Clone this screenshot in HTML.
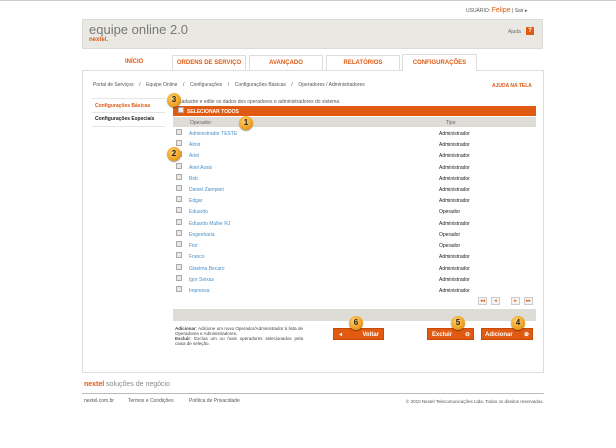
<!DOCTYPE html>
<html><head><meta charset="utf-8"><style>
*{margin:0;padding:0;box-sizing:border-box}
body{width:616px;height:448px;background:#fff;font-family:"Liberation Sans",sans-serif;position:relative;overflow:hidden;color:#333}
.a{position:absolute;white-space:nowrap}
.t5{font-size:5px}.t6{font-size:6px}
.tab{position:absolute;top:55px;height:15px;border:1px solid #ddd;border-bottom:none;background:#fff;color:#e05a12;font-size:6px;font-weight:bold;text-align:center;line-height:15px}
.cb{position:absolute;left:176px;width:6px;height:6px;border:1px solid #aaa;background:#e8e8e8}
.lk{position:absolute;left:189px;font-size:5px;color:#4a90c8}
.tp{position:absolute;left:439px;font-size:5px;color:#222}
.btn{position:absolute;top:328px;height:12px;background:#e05a12;color:#fff;font-size:6px;font-weight:bold;line-height:12px;border:1px solid #c84a08}
.pg{position:absolute;top:297px;width:9px;height:8px;border:1px solid #ccc;background:#f4f4f4;color:#e05a12;font-size:5px;text-align:center;line-height:7px}
.badge{position:absolute;width:14px;height:14px;border-radius:50%;background:radial-gradient(circle at 40% 35%,#ffd070,#f0a020 60%,#c87810);color:#222;font-size:8px;font-weight:bold;text-align:center;line-height:14px;box-shadow:0 1px 1px rgba(0,0,0,.4)}
</style></head><body>
<div style="position:absolute;left:0;top:0;width:616px;height:1px;background:#ccc"></div>
<div class="a t5" style="left:466px;top:7px;color:#555">USUÁRIO: <span style="color:#e05a12;font-size:7px">Felipe</span> | Sair ▸</div>
<div class="a" style="left:82px;top:19px;width:461px;height:30px;background:#e9e8e3;border:1px solid #dcdbd6"></div>
<div class="a" style="left:89px;top:22px;font-size:13px;color:#777">equipe online 2.0</div>
<div class="a" style="left:89px;top:37px;font-size:6px;font-weight:bold;color:#e05a12">nextel.</div>
<div class="a t5" style="left:508px;top:29px;color:#666">Ajuda</div>
<div class="a" style="left:526px;top:27px;width:8px;height:8px;background:#e05a12;color:#fff;font-size:6px;text-align:center;line-height:8px;font-weight:bold">?</div>
<div class="a t6" style="left:125px;top:59px;color:#e05a12;font-weight:bold">INÍCIO</div>
<div class="tab" style="left:172px;width:74px">ORDENS DE SERVIÇO</div>
<div class="tab" style="left:249px;width:74px">AVANÇADO</div>
<div class="tab" style="left:326px;width:74px">RELATÓRIOS</div>
<div class="a" style="left:82px;top:70px;width:462px;height:303px;border:1px solid #ddd;background:#fff"></div>
<div class="tab" style="left:402px;top:54px;width:75px;height:17px;line-height:17px;border-color:#ddd">CONFIGURAÇÕES</div>
<div class="a t5" style="left:93px;top:82px;color:#555">Portal de Serviços &nbsp;&nbsp; / &nbsp;&nbsp; Equipe Online &nbsp;&nbsp; / &nbsp;&nbsp; Configurações &nbsp;&nbsp; / &nbsp;&nbsp; Configurações Básicas &nbsp;&nbsp; / &nbsp;&nbsp; Operadores / Administradores</div>
<div class="a t5" style="left:492px;top:83px;color:#e05a12;font-weight:bold">AJUDA NA TELA</div>
<div class="a" style="left:92px;top:98px;width:73px;height:1px;background:#e5e5e5"></div>
<div class="a t5" style="left:95px;top:103px;color:#e05a12;font-weight:bold">Configurações Básicas</div>
<div class="a" style="left:92px;top:112px;width:73px;height:1px;background:#e5e5e5"></div>
<div class="a t5" style="left:95px;top:116px;color:#222;font-weight:bold">Configurações Especiais</div>
<div class="a" style="left:92px;top:126px;width:73px;height:1px;background:#e5e5e5"></div>
<div class="a t5" style="left:178px;top:99px;color:#555">Cadastre e edite os dados dos operadores e administradores do sistema</div>
<div class="a" style="left:173px;top:106px;width:363px;height:10px;background:#e05a12"></div>
<div class="a" style="left:178px;top:107px;width:6px;height:6px;border:1px solid #aaa;background:#eee"></div>
<div class="a t5" style="left:187px;top:109px;color:#fff;font-weight:bold">SELECIONAR TODOS</div>
<div class="a" style="left:173px;top:117px;width:363px;height:10px;background:#dedcd7"></div>
<div class="a t5" style="left:190px;top:120px;color:#666">Operador</div>
<div class="a t5" style="left:446px;top:120px;color:#666">Tipo</div>
<div class="cb" style="top:129px"></div><div class="lk" style="top:131px">Administrador TESTE</div><div class="tp" style="top:131px">Administrador</div>
<div class="cb" style="top:140px"></div><div class="lk" style="top:142px">Almir</div><div class="tp" style="top:142px">Administrador</div>
<div class="cb" style="top:151px"></div><div class="lk" style="top:153px">Ariel</div><div class="tp" style="top:153px">Administrador</div>
<div class="cb" style="top:163px"></div><div class="lk" style="top:165px">Ariel Assis</div><div class="tp" style="top:165px">Administrador</div>
<div class="cb" style="top:174px"></div><div class="lk" style="top:176px">Bob</div><div class="tp" style="top:176px">Administrador</div>
<div class="cb" style="top:185px"></div><div class="lk" style="top:187px">Daniel Zampieri</div><div class="tp" style="top:187px">Administrador</div>
<div class="cb" style="top:196px"></div><div class="lk" style="top:198px">Edgar</div><div class="tp" style="top:198px">Administrador</div>
<div class="cb" style="top:207px"></div><div class="lk" style="top:209px">Eduardo</div><div class="tp" style="top:209px">Operador</div>
<div class="cb" style="top:219px"></div><div class="lk" style="top:221px">Eduardo Muller RJ</div><div class="tp" style="top:221px">Administrador</div>
<div class="cb" style="top:230px"></div><div class="lk" style="top:232px">Engenharia</div><div class="tp" style="top:232px">Operador</div>
<div class="cb" style="top:241px"></div><div class="lk" style="top:243px">Fior</div><div class="tp" style="top:243px">Operador</div>
<div class="cb" style="top:252px"></div><div class="lk" style="top:254px">Franco</div><div class="tp" style="top:254px">Administrador</div>
<div class="cb" style="top:264px"></div><div class="lk" style="top:266px">Giselma Becaro</div><div class="tp" style="top:266px">Administrador</div>
<div class="cb" style="top:275px"></div><div class="lk" style="top:277px">Igor Seixas</div><div class="tp" style="top:277px">Administrador</div>
<div class="cb" style="top:286px"></div><div class="lk" style="top:288px">Impressa</div><div class="tp" style="top:288px">Administrador</div>
<div class="pg" style="left:478px">◂◂</div><div class="pg" style="left:491px">◂</div>
<div class="pg" style="left:511px">▸</div><div class="pg" style="left:524px">▸▸</div>
<div class="a" style="left:173px;top:309px;width:363px;height:12px;background:#dedcd7"></div>
<div class="a" style="left:175px;top:326px;width:128px;font-size:4.5px;color:#444;line-height:5px;white-space:normal;text-align:justify"><b>Adicionar</b>: Adicione um novo Operador/Administrador à lista de Operadores e Administradores.<br><b>Excluir</b>: Exclua um ou mais operadores selecionados pela caixa de seleção.</div>
<div class="btn" style="left:333px;width:51px"><span style="position:absolute;left:5px">◂</span><span style="position:absolute;right:4px">Voltar</span></div>
<div class="btn" style="left:427px;width:47px"><span style="position:absolute;left:4px">Excluir</span><span style="position:absolute;right:3px">⊖</span></div>
<div class="btn" style="left:481px;width:52px"><span style="position:absolute;left:3px">Adicionar</span><span style="position:absolute;right:3px">⊕</span></div>
<div class="badge" style="left:239px;top:116px">1</div>
<div class="badge" style="left:167px;top:147px">2</div>
<div class="badge" style="left:167px;top:93px">3</div>
<div class="badge" style="left:511px;top:316px">4</div>
<div class="badge" style="left:451px;top:316px">5</div>
<div class="badge" style="left:349px;top:316px">6</div>
<div class="a" style="left:84px;top:381px;font-size:7px;color:#888"><b style="color:#e05a12">nextel</b> soluções de negócio</div>
<div class="a" style="left:82px;top:393px;width:462px;height:1px;background:#bbb"></div>
<div class="a t5" style="left:84px;top:398px;color:#555">nextel.com.br</div>
<div class="a t5" style="left:128px;top:398px;color:#555">Termos e Condições</div>
<div class="a t5" style="left:189px;top:398px;color:#555">Política de Privacidade</div>
<div class="a" style="left:406px;top:399px;font-size:4.5px;color:#555">© 2010 Nextel Telecomunicações Ltda. Todos os direitos reservados.</div>
</body></html>
